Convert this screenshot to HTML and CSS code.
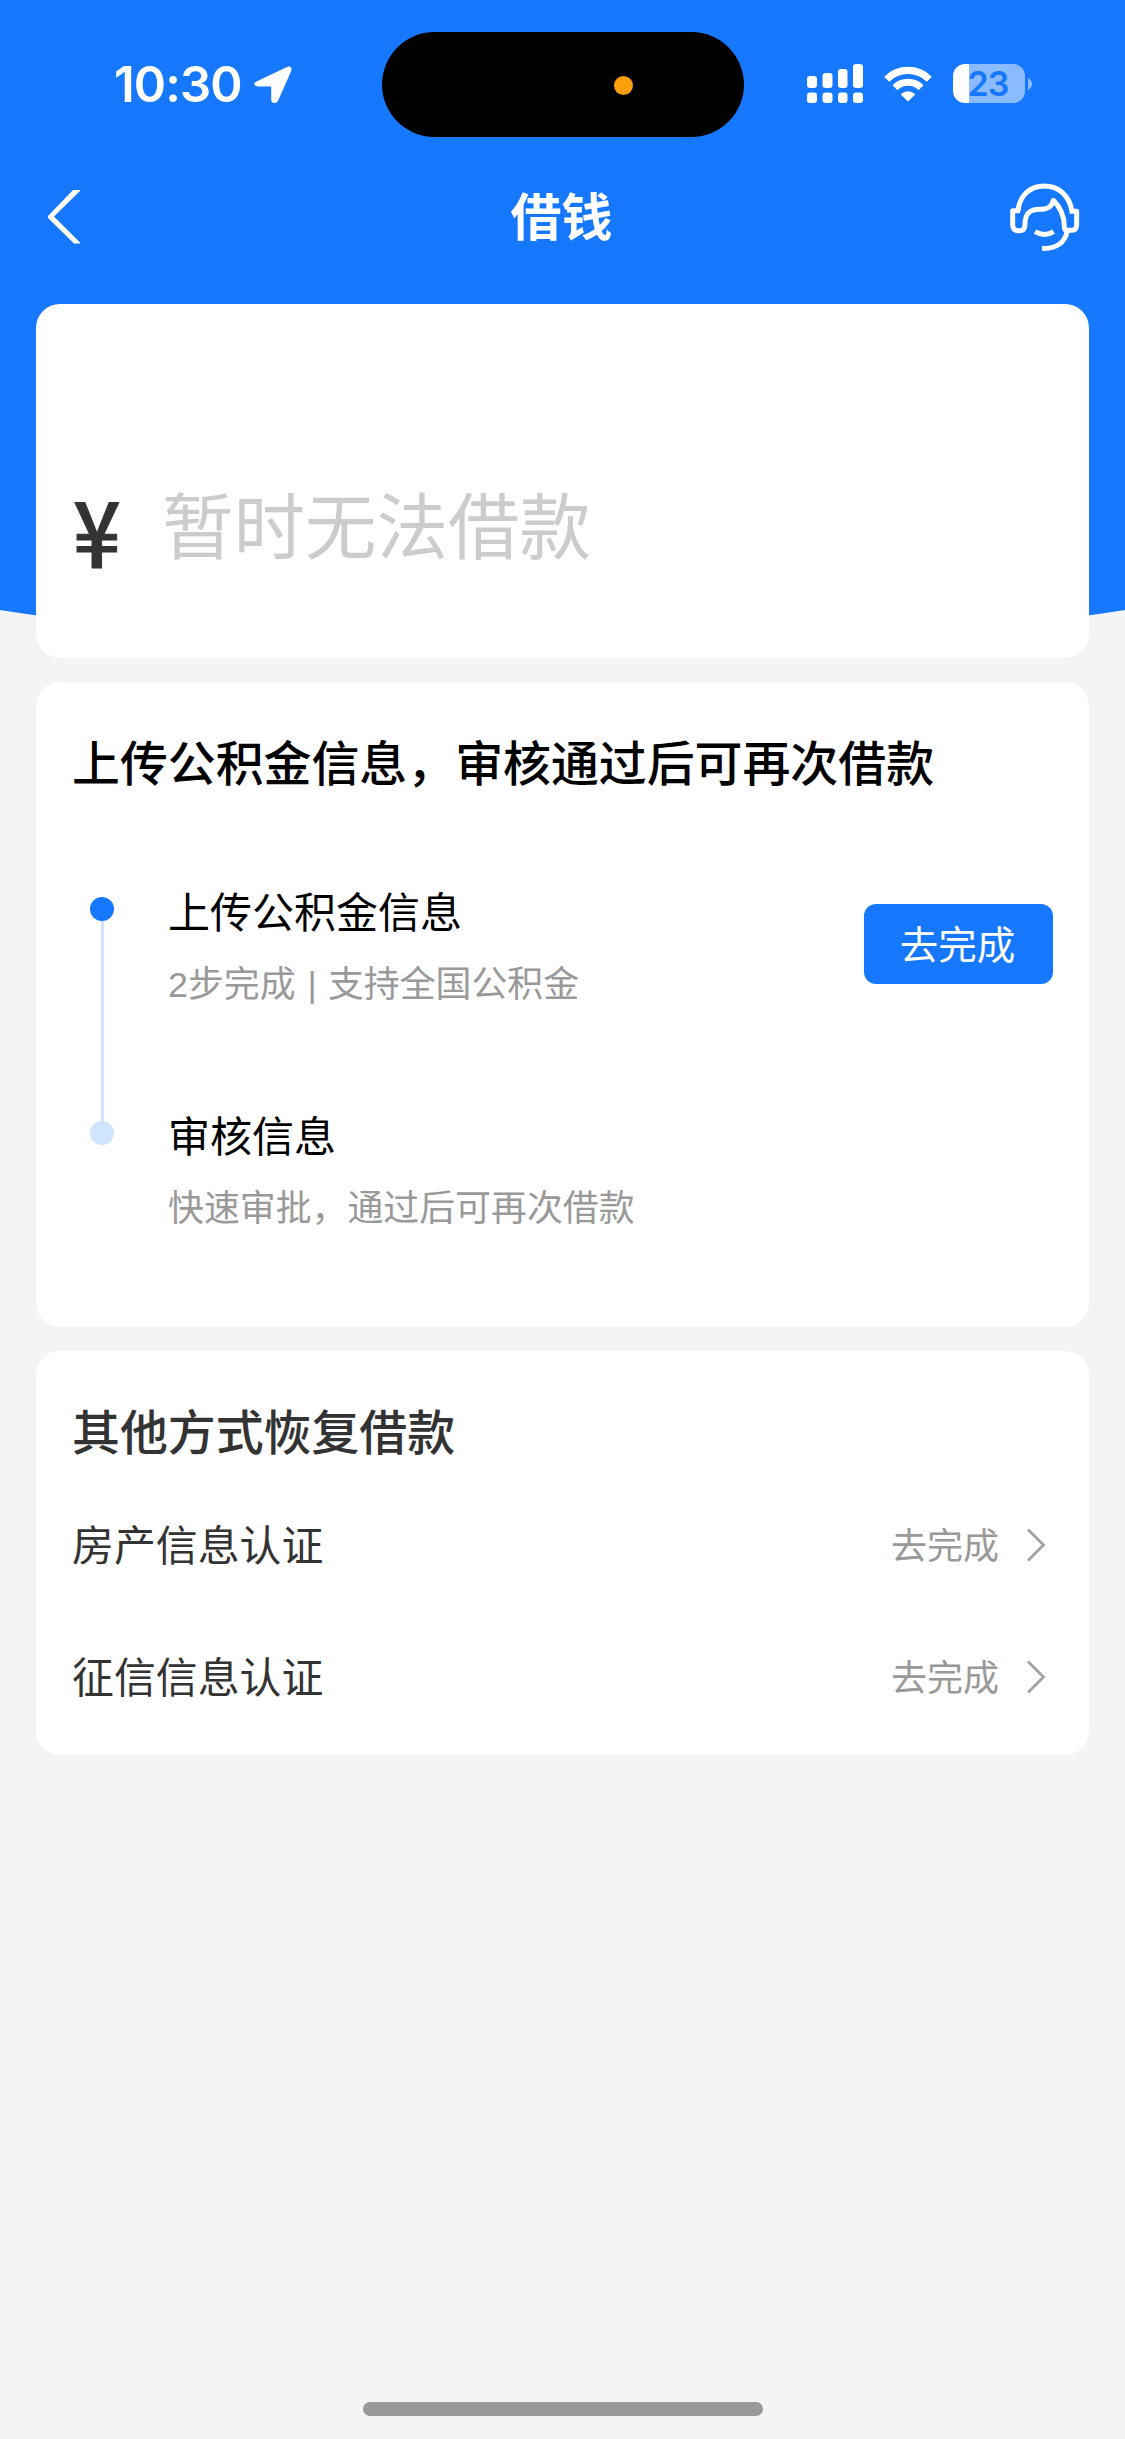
FILE: index.html
```html
<!DOCTYPE html>
<html lang="zh-CN">
<head>
<meta charset="utf-8">
<title>借钱</title>
<link rel="stylesheet" href="styles.css">
</head>
<body>
<div class="page">
  <div class="hero-bg"></div>

  <header class="status-bar">
    <div class="status-left">
      <span class="time">10:30</span>
      <svg class="location" width="38" height="38" viewBox="0 0 38 38"><path d="M3.5 15 L33 .9 Q38.400 -.7 37.200 5 L24.200 34.500 Q22.900 37.300 20.200 37 Q17.200 36.600 17.200 33.500 V20.400 H3.900 Q.8 20.200 .3 17.900 Q0 16.300 3.500 15Z" fill="#fff"/></svg>
    </div>
    <div class="island"><span class="mic-dot"></span></div>
    <div class="status-right">
      <svg class="signal" width="56" height="39" viewBox="0 0 56 39" fill="#fff">
        <rect x="0" y="12" width="10" height="12" rx="3"/><rect x="15.500" y="9" width="10" height="15" rx="3"/><rect x="31" y="5" width="9.500" height="19" rx="3"/><rect x="46" y="0" width="10" height="24" rx="3"/>
        <rect x="0" y="28.500" width="10" height="10.500" rx="3"/><rect x="15.500" y="28.500" width="10" height="10.500" rx="3"/><rect x="31" y="28.500" width="9.500" height="10.500" rx="3"/><rect x="46" y="28.500" width="10" height="10.500" rx="3"/>
      </svg>
      <svg class="wifi" width="48" height="36" viewBox="0 0 48 36" fill="none" stroke="#fff">
        <path d="M2.700 13.200 A30.300 30.300 0 0 1 45.300 13.200" stroke-width="7.200"/>
        <path d="M11 21.700 A18.500 18.500 0 0 1 37 21.700" stroke-width="7"/>
        <path d="M24 35.600 L16.600 28.300 Q24 22 31.400 28.300Z" fill="#fff" stroke="none"/>
      </svg>
      <div class="battery"><span>23</span></div>
      <svg class="nub" width="4" height="12" viewBox="0 0 4 12"><path d="M0 0 Q4 2 4 6 T0 12Z" fill="#8bbbff"/></svg>
    </div>
  </header>

  <nav class="nav">
    <svg class="back" width="33" height="54" viewBox="0 0 33 54"><path d="M25 0 L0 26 V28 L26 53.500 H32 V52.500 L6 26.500 L32 1 V0Z" fill="#fff"/></svg>
    <h1>借钱</h1>
    <svg class="service" width="72" height="72" viewBox="88 64 216 216" fill="none" stroke="#fff" stroke-width="15" stroke-linejoin="round">
      <path d="M115 152 C119 105 151 76 194 76 C237 76 270 105 277 152"/>
      <path d="M121 150 H99 V192 Q99 210 117 210 H121 Q136 210 136 190 C136 159 150 146 181 146 C205 146 216 139 221 119 C244 142 254 168 254 198 Q254 209 264 209 H274 Q291 209 291 192 V152 H270"/>
      <path d="M263 210 C256 246 229 265 187 263"/>
      <path d="M166 213 Q195 230 222 213"/>
    </svg>
  </nav>

  <main class="cards">
    <section class="card amount">
      <span class="yen">¥</span>
      <span class="placeholder">暂时无法借款</span>
    </section>

    <section class="card upload">
      <h2>上传公积金信息，审核通过后可再次借款</h2>
      <div class="steps">
        <div class="track"><i class="dot"></i><i class="line"></i><i class="dot pale"></i></div>
        <div class="step-list">
          <div class="step"><h3>上传公积金信息</h3><p>2步完成 <span class="bar">|</span> 支持全国公积金</p></div>
          <div class="step"><h3>审核信息</h3><p>快速审批，通过后可再次借款</p></div>
        </div>
        <button class="go">去完成</button>
      </div>
    </section>

    <section class="card others">
      <h2>其他方式恢复借款</h2>
      <div class="row">
        <span class="name">房产信息认证</span><span class="action">去完成</span>
        <svg width="20" height="34" viewBox="0 0 20 34"><path d="M2 1.500 L17.500 17 L2 32.500" fill="none" stroke="#a3a3a3" stroke-width="2.900"/></svg>
      </div>
      <div class="row">
        <span class="name">征信信息认证</span><span class="action">去完成</span>
        <svg width="20" height="34" viewBox="0 0 20 34"><path d="M2 1.500 L17.500 17 L2 32.500" fill="none" stroke="#a3a3a3" stroke-width="2.900"/></svg>
      </div>
    </section>
  </main>

  <div class="home-indicator"></div>
</div>
</body>
</html>
```

FILE: styles.css
```css
* { box-sizing: border-box; margin: 0; padding: 0; }

body {
  background: #f4f4f4;
  font-family: "Noto Sans CJK SC", sans-serif;
}

svg { display: block; flex: none; }

.page {
  position: relative;
  width: 1125px;
  height: 2439px;
  display: flex;
  flex-direction: column;
  overflow: hidden;
}

/* Blue backdrop with a gently curved lower edge */
.hero-bg {
  position: absolute;
  inset: 0 0 auto 0;
  height: 653px;
  background: #1677ff;
  clip-path: ellipse(3700px 3700px at 562.5px -3047px);
}

.status-bar, .nav, .cards { position: relative; }

.status-bar {
  display: grid;
  grid-template-columns: 382px 362px 1fr;
  height: 137px;
  padding-top: 32px;
}

.status-left { display: flex; align-items: center; padding-left: 114px; height: 104px; }
.time {
  width: 140px;
  padding-top: 1px;
  font: 600 49px/60px "Inter", sans-serif;
  letter-spacing: -0.9px;
  color: #fff;
  white-space: nowrap;
}
.location { margin-top: 1px; }

.island {
  height: 105px;
  border-radius: 53px;
  background: #000;
  display: flex;
  align-items: center;
  padding: 2px 0 0 232px;
}
.mic-dot { width: 19px; height: 19px; border-radius: 50%; background: #ff9f0a; }

.status-right { display: flex; align-items: center; padding-left: 63px; height: 103px; }
.wifi { margin-left: 21px; }
.battery {
  width: 72px;
  height: 39px;
  margin-left: 21px;
  padding-right: 2px;
  border-radius: 12px;
  background: linear-gradient(90deg, #fff 16px, #8bbbff 16px);
  font: 600 34px/40px "Inter", sans-serif;
  letter-spacing: -0.8px;
  color: #1677ff;
  text-align: center;
}
.nub { margin-left: 3px; }

.nav {
  display: grid;
  grid-template-columns: 120px 1fr 120px;
  align-items: center;
  height: 167px;
  padding: 0 0 8px;
}
.nav h1 {
  margin-top: -6px;
  padding-right: 2px;
  text-align: center;
  font-size: 51px;
  line-height: 64px;
  font-weight: 700;
  color: #fff;
}
.back { margin: 1px 0 0 48px; }
.service { margin-left: 4px; margin-top: 2px; }

.cards { display: flex; flex-direction: column; gap: 24px; padding: 0 36px; }
.card { background: #fff; border-radius: 24px; }
.card h2 { font-size: 47.900px; line-height: 60px; font-weight: 500; white-space: nowrap; }

.amount { height: 354px; display: flex; padding: 173px 36px 0; }
.yen {
  width: 90px;
  padding: 1px 0 0 1px;
  font-size: 91px;
  line-height: 100px;
  font-weight: 500;
  -webkit-text-stroke: 1px #333;
  color: #333;
  transform: scaleX(0.92);
  transform-origin: 0 50%;
}
.placeholder { font-size: 71.500px; line-height: 90px; color: #ccc; }

.upload { height: 645px; padding: 48px 36px 0; color: #000; }
.steps { display: flex; padding-top: 90px; }
.track { width: 60px; padding-top: 17px; display: flex; flex-direction: column; align-items: center; }
.dot { width: 24px; height: 24px; border-radius: 50%; background: #1677ff; }
.dot.pale { background: #d0e4ff; }
.line { width: 3px; height: 200px; background: #d0e4ff; }
.step-list { flex: 1; padding-left: 36px; }
.step { height: 224px; }
.step h3 { font-size: 42px; line-height: 60px; font-weight: 400; }
.step p {
  padding-top: 20px;
  font: 35.900px/50px "Liberation Sans", "Noto Sans CJK SC", sans-serif;
  color: #999;
}
.step .bar { padding: 0 1px 0 2px; }
.go {
  width: 189px;
  height: 80px;
  margin-top: 24px;
  padding-bottom: 5px;
  padding-right: 2px;
  border: 0;
  border-radius: 12px;
  background: #1677ff;
  color: #fff;
  font: 38.500px/60px "Noto Sans CJK SC", sans-serif;
}

.others { height: 404px; padding: 48px 36px 0; color: #333; }
.row { display: flex; align-items: center; height: 132px; }
.others h2 + .row { margin-top: 18px; }
.name { flex: 1; font-size: 41.900px; line-height: 60px; }
.action { font-size: 36px; line-height: 50px; color: #999; }
.row svg { margin: 4px 7px 0 27px; }

.home-indicator {
  position: absolute;
  left: 363px;
  bottom: 23px;
  width: 400px;
  height: 14px;
  border-radius: 7px;
  background: #999;
}
```
